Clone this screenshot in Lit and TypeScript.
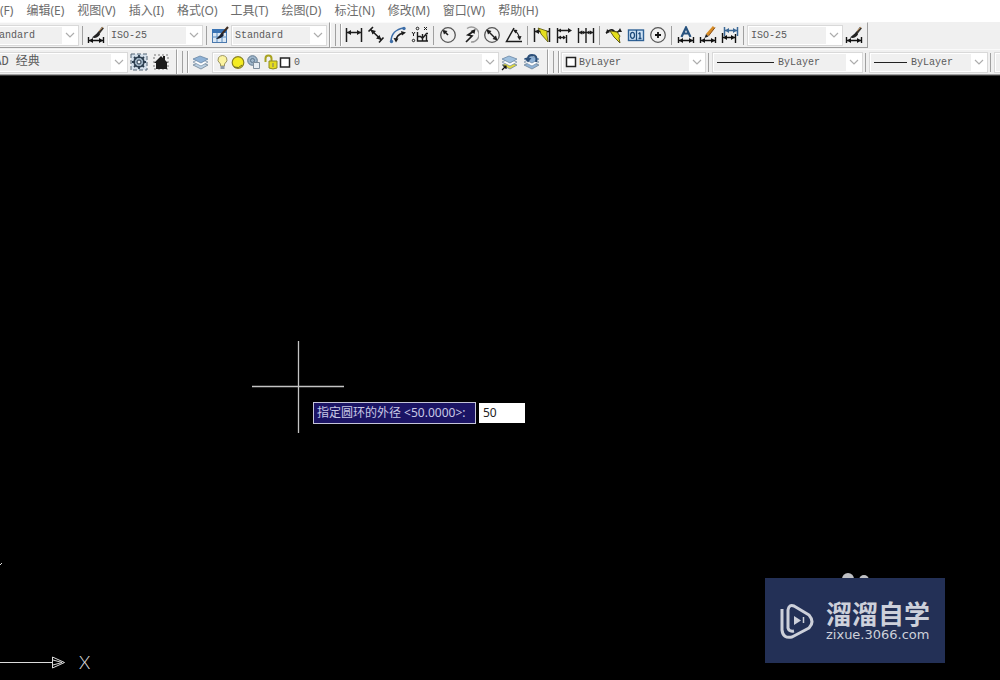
import { LitElement, html, svg, css, nothing, TemplateResult, SVGTemplateResult } from "lit";
import { customElement, property } from "lit/decorators.js";
import { classMap } from "lit/directives/class-map.js";

const dimBar = svg`<path d="M1.5 11v6M16.5 11v6M2 14.5h14" stroke="#111" stroke-width="1.4"/><path d="M2 14.5l4-2.5v5zM16 14.5l-4-2.5v5z" fill="#111"/>`;
const brush = svg`<path d="M16 1.5L11 8" stroke="#3a3530" stroke-width="2.4"/><path d="M16 1l-4 4" stroke="#b58b5a"/><path d="M11.500 6L5 11.500q5 1.500 8-3z" fill="#222"/>`;
const sheets = (a: string, b: string) => svg`
  <path d="M1 12l7-3 8 3-7 4z" fill="${b}" stroke="#6f8497" stroke-width=".8"/>
  <path d="M1 9l7-3 8 3-7 4z" fill="#fff" stroke="#7d93a8" stroke-width=".8"/>
  <path d="M1 6l7-3 8 3-7 4z" fill="${a}" stroke="#6b88a6" stroke-width=".8"/>`;
const k = "#1c1c1c";

const icons: Record<string, SVGTemplateResult> = {
  dimstyle: svg`${brush}${dimBar}`,
  table: svg`<rect x="1.500" y="3.500" width="14" height="13" fill="#dbe8f5" stroke="#4b79ad"/><path d="M1 3h15v4H1z" fill="#3a74b5"/><path d="M1 11h15M6 7v9M11 7v9" stroke="#5b8cc0"/><path d="M17 1l-7 8" stroke="#3b2a20" stroke-width="2"/><path d="M11 7l-6 6q5 0 8-4z" fill="#182030"/>`,
  linear: svg`<path d="M1.500 2v14M16.500 2v14M2 6.500h14" stroke="${k}" stroke-width="1.500"/><path d="M2 6.500l4-2.500v5zM16 6.500l-4-2.500v5z" fill="${k}"/>`,
  aligned: svg`<path d="M6 1L1.500 5.500M16.500 11.500L12 16.500M4 4l10 9.500" stroke="${k}" stroke-width="1.600"/><path d="M3.500 3.500l5.500 1.500-3.500 3.500zM14.500 14l-5.500-1.500 3.500-3.500z" fill="${k}"/>`,
  arc: svg`<path d="M2 16C2 8 7 3 15 2" fill="none" stroke="#3d6ea8" stroke-width="1.600"/><path d="M7 15q0-6 7-8" fill="none" stroke="${k}" stroke-width="1.500"/><path d="M12 5l5 1.500-4 3zM4.500 12l5 .5-2.500 4z" fill="${k}"/><circle cx="2.500" cy="15.500" r="1.700" fill="#3d6ea8"/><circle cx="15" cy="2.500" r="1.700" fill="#3d6ea8"/>`,
  ordinate: svg`<path d="M6.500 6v9H17M6.500 10.500h3l2 2 4-5h1.500M11.500 8v7M15.500 9v6" fill="none" stroke="${k}" stroke-width="1.400"/><circle cx="6.500" cy="2.500" r="1.300" fill="none" stroke="${k}"/><path d="M13 1l3 3M16 1l-3 3M1 6l1.500 2L4 6M2.500 8v2" stroke="${k}" fill="none"/><circle cx="2.500" cy="14.500" r="1.200" fill="none" stroke="${k}"/>`,
  radius: svg`<circle cx="9" cy="9" r="7.300" fill="none" stroke="#555" stroke-width="1.300"/><path d="M9 9L5 5" stroke="${k}" stroke-width="1.600"/><path d="M3.500 4l5 1-3.500 3.500z" fill="${k}"/>`,
  jogged: svg`<path d="M6 2.500a7.500 7.500 0 1 1 4 13.500" fill="none" stroke="#999" stroke-width="1.500"/><path d="M13 5L7 9l4 1-6 6" fill="none" stroke="${k}" stroke-width="1.700"/><path d="M14.500 3l-1 5-4-3z" fill="${k}"/>`,
  diameter: svg`<circle cx="9" cy="9" r="7.300" fill="none" stroke="#555" stroke-width="1.300"/><path d="M5 5l8 8" stroke="${k}" stroke-width="1.500"/><path d="M3.500 3.500l5 1.500L5 8.500zM14.500 14.500l-5-1.500L13 9.500z" fill="${k}"/>`,
  angular: svg`<path d="M9 2L1.500 15.500H17" fill="none" stroke="${k}" stroke-width="1.500"/><path d="M9 4.500q5 2 5.500 9" fill="none" stroke="${k}" stroke-width="1.200"/><path d="M8 3.500l4.500.5-2 3.500zM12 10.500l4.500-.5-1.500 4z" fill="${k}"/>`,
  quick: svg`<path d="M1.500 2v14M16.500 2v14M2 5.500h14" stroke="${k}" stroke-width="1.500"/><path d="M2 5.500L6 3v5z" fill="${k}"/><path d="M5 2l9 3v4l1 7-7-8-1-3z" fill="#e5df1e" stroke="#55500a" stroke-width=".8"/>`,
  baseline: svg`<path d="M2.500 2v15M2 4.500h13M2 11.500h8M11.500 9v8" stroke="${k}" stroke-width="1.400"/><path d="M17 4.500l-4-2.500v5zM3 4.500L6 2.500v4zM3 11.500l3-2v4zM11 11.500l-3-2v4z" fill="${k}"/>`,
  continue: svg`<path d="M1.500 2v15M9 2v15M16.500 2v15M2 6.500h14" stroke="${k}" stroke-width="1.400"/><path d="M2 6.500L5 4.500v4zM8.500 6.500l-3-2v4zM9.500 6.500l3-2v4zM16 6.500l-3-2v4z" fill="${k}"/>`,
  leader: svg`<path d="M1 7q5-5 8-2t6-1" fill="none" stroke="${k}" stroke-width="1.600"/><path d="M1 8l1-5 3 3zM13 6l2-4 2 4z" fill="${k}"/><path d="M5 5l7 1 3 4-1 2 1 5-6-6-2-3z" fill="#e5df1e" stroke="#55500a" stroke-width=".9"/>`,
  tolerance: svg`<rect x="1.500" y="4" width="15" height="10.500" fill="#cfe3f5" stroke="#2f6296" stroke-width="1.400"/><path d="M9.500 4v10.500M13 6.500v6M11.500 8l1.500-1.500M11.500 12.500h3" stroke="#1d4a7a" stroke-width="1.300"/><ellipse cx="5.500" cy="9.300" rx="2" ry="3" fill="none" stroke="#1d4a7a" stroke-width="1.300"/>`,
  center: svg`<circle cx="9" cy="9" r="7.300" fill="none" stroke="#555" stroke-width="1.200"/><path d="M9 6v6M6 9h6" stroke="#111" stroke-width="1.800"/>`,
  textedit: svg`<path d="M4.500 11L9 1.500 13.500 11M6 7.500h6" fill="none" stroke="#28537f" stroke-width="2.200"/>${dimBar}`,
  dimedit: svg`<path d="M15 1L8 9" stroke="#d58b25" stroke-width="3"/><path d="M16 1.500L9.500 10" stroke="#8d501a"/><path d="M7 8l2.500 2.500L5.500 12z" fill="#222"/>${dimBar}`,
  update: svg`<path d="M3.500 1v9M16.500 1v9M4 4.500h12" stroke="#3b6896" stroke-width="1.500"/><path d="M4 4.500L8 2v5zM16 4.500L12 2v5z" fill="#3b6896"/><path d="M1.500 7v10M14.500 8v9M2 11.500h12" stroke="#111" stroke-width="1.400"/><path d="M2 11.500L6 9v5zM14 11.500L10 9v5z" fill="#111"/>`,
  gear: svg`<rect x="1" y="1" width="16" height="16" fill="#d5e0eb" stroke="#526474" stroke-dasharray="4 2"/><circle cx="9" cy="9" r="5" fill="#9cafc0" stroke="#2b3d4e" stroke-width="1.400"/><path d="M9 2v3M9 13v3M2 9h3M13 9h3M4 4l2 2M12 12l2 2M14 4l-2 2M6 12l-2 2" stroke="#2b3d4e" stroke-width="1.800"/><circle cx="9" cy="9" r="2" fill="#eef4fa" stroke="#2b3d4e"/>`,
  home: svg`<path d="M2 2h14v14H2z" fill="none" stroke="#777" stroke-dasharray="2 2"/><path d="M2 10l7-7 2 2V3h2v4l3 3h-1v6H4v-6z" fill="#1b1b1b"/>`,
  layers: sheets("#8fb2d6", "#bcd0e2"),
  layerstates: svg`${sheets("#9fc0de", "#e2d93c")}<path d="M1 17l4-4M2 13h3v3" fill="none" stroke="#111" stroke-width="1.200"/>`,
  layerprev: svg`${sheets("#8fb2d6", "#8fb2d6")}<path d="M13 9q2-7-4-7-4 0-4 4" fill="none" stroke="#2c4f78" stroke-width="2"/><path d="M1.500 5h7L5 9.500z" fill="#2c4f78"/>`,
};

@customElement("cad-icon")
class CadIcon extends LitElement {
  @property() name = "";
  static styles = css`
    :host { display: block; width: 18px; height: 18px; }
    svg { display: block; }
  `;
  render() {
    return html`<svg width="18" height="18" viewBox="0 0 18 18" aria-hidden="true" fill="none">${icons[this.name]}</svg>`;
  }
}

@customElement("cad-combo")
class CadCombo extends LitElement {
  @property() label = "";
  @property() value = "";
  @property() lead = "";
  static styles = css`
    :host { display: block; flex: none; height: 21px; }
    .box {
      position: relative; display: grid; align-items: center; box-sizing: border-box; height: 100%;
      border: 1px solid #d9d9d9; background: #fff; padding: 1px 0 1px 1px;
      grid-template-columns: minmax(0, 1fr) 16px;
    }
    select {
      grid-area: 1 / 1 / 2 / 3; appearance: none; margin: 0; border: 0; border-radius: 0; width: 100%; height: 17px;
      padding: 0 16px 0 2px; color: #5a5a5a;
      background: linear-gradient(#f0f0f0, #f0f0f0) left / calc(100% - 16px) 100% no-repeat, #fff;
      font: 10px/17px "Liberation Mono", "Noto Sans CJK SC", monospace;
    }
    .cjk { font: 12px/17px "Liberation Mono", "Noto Sans CJK SC", monospace; }
    .swatch { padding-left: 16px; }
    .line { padding-left: 64px; }
    .short { padding-left: 40px; }
    .layer { padding-left: 80px; }
    .lead, .arrow { grid-area: 1 / 1; pointer-events: none; z-index: 1; display: block; }
    .arrow { grid-area: 1 / 2; justify-self: center; }
  `;
  private art(): TemplateResult | typeof nothing {
    switch (this.lead) {
      case "swatch":
        return html`<svg class="lead" width="16" height="16"><rect x="3.500" y="3.500" width="9" height="9" fill="#fff" stroke="#222" stroke-width="1.500"/></svg>`;
      case "line":
        return html`<svg class="lead" width="64" height="16"><path d="M3 8.500h57" stroke="#222"/></svg>`;
      case "short":
        return html`<svg class="lead" width="40" height="16"><path d="M3 8.500h33" stroke="#222"/></svg>`;
      case "layer":
        return html`<svg class="lead" width="80" height="17" fill="none">
          <path d="M6.500 10Q2.500 7 4.500 3.500q4-4 8 0 2 3.500-2 6.500v2h-4z" fill="#fbf3a0" stroke="#9c9460"/><path d="M6.500 12h4v3h-4z" fill="#8a97a8"/>
          <circle cx="24" cy="8.500" r="5.800" fill="#f4ec21" stroke="#8a8220" stroke-width="1.200"/><path d="M20 13q5 2 8-2" stroke="#6d6a26"/>
          <circle cx="38.500" cy="6.500" r="4.800" fill="#9fb6ca" stroke="#60798f"/><circle cx="38.500" cy="6.500" r="2" stroke="#60798f"/><path d="M39.500 8.500h6v6h-6z" fill="#e6edf3" stroke="#7d8d9c"/>
          <path d="M51.500 8V4.500q0-3 3-3t3 3V9" stroke="#a8a220" stroke-width="2"/><path d="M55 7h8v7q-4 2-8 0z" fill="#e5dc1f" stroke="#8e8a20"/><path d="M59 9v4" stroke="#777"/>
          <rect x="66.500" y="4" width="9" height="9" fill="#fff" stroke="#222" stroke-width="1.500"/></svg>`;
      default:
        return nothing;
    }
  }
  render() {
    const cls = { [this.lead]: !!this.lead };
    return html`<div class="box">
      <select class=${classMap(cls)} aria-label=${this.label}><option>${this.value}</option></select>
      ${this.art()}
      <svg class="arrow" width="10" height="6" fill="none"><path d="M1 1l4 4 4-4" stroke="#adadad" stroke-width="1.200"/></svg>
    </div>`;
  }
}

const menus = ["文件(F)", "编辑(E)", "视图(V)", "插入(I)", "格式(O)", "工具(T)", "绘图(D)", "标注(N)", "修改(M)", "窗口(W)", "帮助(H)"];

const dimensionTools: [string, string][][] = [
  [["linear", "线性"], ["aligned", "对齐"], ["arc", "弧长"], ["ordinate", "坐标"]],
  [["radius", "半径"], ["jogged", "折弯"], ["diameter", "直径"], ["angular", "角度"]],
  [["quick", "快速标注"], ["baseline", "基线"], ["continue", "连续"]],
  [["leader", "引线"], ["tolerance", "公差"], ["center", "圆心标记"]],
  [["textedit", "编辑标注文字"], ["dimedit", "编辑标注"], ["update", "标注更新"]],
];

@customElement("app-root")
class AppRoot extends LitElement {
  static styles = css`
    :host {
      display: flex; flex-direction: column; height: 100vh; overflow: hidden; background: #000;
      font-family: "Noto Sans", "Noto Sans CJK SC", sans-serif;
    }
    button { border: 0; margin: 0; padding: 0; background: none; font: inherit; color: inherit; }
    .menu { display: flex; gap: 13px; flex: none; height: 22px; margin-left: -24px; background: #fff; }
    .menu button { flex: none; color: #6c6c6c; font: 12px/22px "Noto Sans", "Noto Sans CJK SC", sans-serif; white-space: nowrap; }
    .row { display: flex; flex: none; box-sizing: border-box; height: 27px; background: #f0f0f0; }
    .row.last { border-bottom: 1px solid #a0a0a0; height: 26px; }
    .bar {
      display: flex; align-items: center; flex: none; box-sizing: border-box; height: 26px;
      border-top: 1px solid #fafafa; border-right: 1px solid #a0a0a0; border-bottom: 1px solid #a0a0a0;
    }
    .last .bar { height: 25px; border-bottom: 0; }
    .bar + .bar { border-left: 1px solid #fff; }
    .styles { width: 347px; margin-left: -17px; }
    .dims { width: 538px; }
    .space { width: 194px; margin-left: -17px; }
    .layerbar { width: 371px; }
    .props { width: 600px; }
    .tool { display: grid; place-items: center; flex: none; width: 22px; height: 22px; }
    .sep { flex: none; width: 1px; height: 19px; margin: 0 2px 0 3px; background: #a0a0a0; }
    .props .sep, .dims .sep { margin: 0 3px 0 2px; }
    .grip { flex: none; width: 4px; height: 22px; margin: 0 2px 0 4px; border: solid #a0a0a0; border-width: 0 1px; box-shadow: 1px 0 #fff; }
    .w96 { width: 96px; }
    .w145 { width: 145px; }
    .w151 { width: 151px; }
    .w119 { width: 119px; }
    .w287 { width: 287px; }
    .stage { position: relative; flex: 1; overflow: hidden; border-top: 1px solid #3a3a3a; background: #000; }
    .cross { position: absolute; left: 252px; top: 265px; }
    .prompt { position: absolute; left: 313px; top: 326px; display: flex; gap: 3px; font-size: 12px; line-height: 20px; }
    .prompt label { box-sizing: border-box; width: 163px; padding-left: 3px; border: 1px solid #c4c4d8; background: #1b1464; color: #c9c8e6; white-space: nowrap; }
    .prompt input { box-sizing: border-box; width: 46px; height: 20px; margin: 1px 0; padding: 0 4px; border: 0; border-radius: 0; outline: 0; background: #fff; color: #222; font: inherit; }
    .ucs { position: absolute; left: 0; bottom: 3px; display: flex; align-items: flex-end; gap: 13px; color: #e2e2e2; font: 300 18px/30px Lato, sans-serif; }
    .ucs svg { display: block; }
    .brand { position: absolute; right: 55px; bottom: 17px; }
    .ears { position: absolute; left: 76px; top: -6px; display: block; }
    .card { position: relative; display: flex; align-items: center; gap: 11px; box-sizing: border-box; width: 180px; height: 85px; padding-left: 14px; background: #233056; color: #cdd0da; }
    .name { font: 700 26px/28px "Noto Sans CJK SC", sans-serif; }
    .site { font: 13px/16px "DejaVu Sans", sans-serif; }
  `;

  private tool(icon: string, label: string) {
    return html`<button class="tool" aria-label=${label}><cad-icon name=${icon}></cad-icon></button>`;
  }

  render() {
    return html`
      <nav class="menu">${menus.map((m) => html`<button>${m}</button>`)}</nav>
      <div class="row">
        <div class="bar styles">
          <cad-combo class="w96" label="文字样式" value="Standard"></cad-combo>
          <span class="sep"></span>
          ${this.tool("dimstyle", "标注样式")}
          <cad-combo class="w96" label="标注样式" value="ISO-25"></cad-combo>
          <span class="sep"></span>
          ${this.tool("table", "表格样式")}
          <cad-combo class="w96" label="表格样式" value="Standard"></cad-combo>
        </div>
        <div class="bar dims">
          <span class="grip"></span>
          ${dimensionTools.map((group) => html`${group.map(([i, l]) => this.tool(i, l))}<span class="sep"></span>`)}
          <cad-combo class="w96" label="当前标注样式" value="ISO-25"></cad-combo>
          ${this.tool("dimstyle", "标注样式管理")}
        </div>
      </div>
      <div class="row last">
        <div class="bar space">
          <cad-combo class="w145" label="工作空间" value="CAD 经典" lead="cjk"></cad-combo>
          ${this.tool("gear", "工作空间设置")}${this.tool("home", "我的工作空间")}
        </div>
        <div class="bar layerbar">
          <span class="grip"></span>
          ${this.tool("layers", "图层特性")}
          <cad-combo class="w287" label="图层" value="0" lead="layer"></cad-combo>
          ${this.tool("layerstates", "图层状态")}${this.tool("layerprev", "上一个图层")}
        </div>
        <div class="bar props">
          <span class="grip"></span>
          <cad-combo class="w145" label="颜色" value="ByLayer" lead="swatch"></cad-combo>
          <span class="sep"></span>
          <cad-combo class="w151" label="线型" value="ByLayer" lead="line"></cad-combo>
          <span class="sep"></span>
          <cad-combo class="w119" label="线宽" value="ByLayer" lead="short"></cad-combo>
          <span class="sep"></span>
          <cad-combo class="w119" label="打印样式" value=""></cad-combo>
        </div>
      </div>
      <main class="stage">
        <svg class="cross" width="93" height="93"><path d="M46.500 0v92M0 45.500h92" stroke="#c4c4c4" stroke-width="1.300"/></svg>
        <div class="prompt">
          <label for="outer">指定圆环的外径 &lt;50.0000&gt;:</label>
          <input id="outer" value="50" />
        </div>
        <div class="ucs">
          <svg width="66" height="120" fill="none" stroke="#dcdcdc"><path d="M0 105.500h52M52.500 100v11l12-5.500zM53 103l9 2.500-9 2.500M0 8l2-2"/></svg>
          <span>X</span>
        </div>
        <div class="brand">
          <svg class="ears" width="32" height="10" fill="#bfc0c4"><circle cx="7" cy="7" r="6"/><circle cx="23" cy="8" r="5"/></svg>
          <div class="card">
            <svg width="36" height="38" viewBox="0 0 36 38" fill="none" stroke="#cdd0da" stroke-width="3" stroke-linejoin="round">
              <path d="M3 7v21q1 9 10 7l17-9q6-6 0-13L15 4q-5-2-6 4v18q1 4 6 3"/>
              <path d="M15 14v9l7-4.500z" fill="#cdd0da" stroke="none"/><path d="M24.500 15v6" stroke-width="1.500"/>
            </svg>
            <div>
              <div class="name">溜溜自学</div>
              <div class="site">zixue.3066.com</div>
            </div>
          </div>
        </div>
      </main>
    `;
  }
}
